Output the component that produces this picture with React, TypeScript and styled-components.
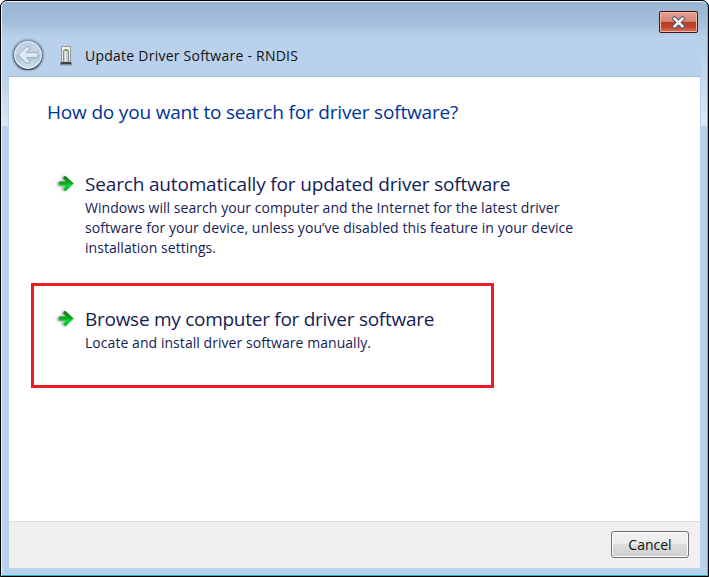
import React from "react";
import styled, { createGlobalStyle } from "styled-components";

const GlobalStyle = createGlobalStyle`
  * { box-sizing: border-box; }
  html, body { margin: 0; padding: 0; background: #fff; overflow: hidden; }
  body { font-family: "Open Sans", "Noto Sans", sans-serif; }
`;

const Frame = styled.div`
  width: 709px;
  height: 577px;
  display: flex;
  border: 1px solid #000;
  border-radius: 7px 7px 0 0;
  background: #000;
`;

const Glass = styled.div`
  flex: 1;
  display: flex;
  flex-direction: column;
  padding: 0 7px 7px 7px;
  border: solid;
  border-width: 1px;
  border-color: #f4f8fc #35cfee #22b2d0 #eef5fb;
  border-radius: 6px 6px 0 0;
  background:
    linear-gradient(180deg, #b9d1ea, #dce8f6) 0 74px / 6px 50px no-repeat,
    linear-gradient(180deg, #b9d1ea, #dce8f6) 100% 50px / 6px 74px no-repeat,
    linear-gradient(180deg, #98b4d2 0px, #a3bedb 20px, #b9d1ea 36px, #b9d1ea 100%);
`;

const TopBar = styled.header`
  height: 75px;
  display: flex;
  justify-content: space-between;
  border-bottom: 1px solid #a3bedb;
`;

const Heading = styled.div`
  display: flex;
  align-items: center;
  padding: 32px 0 0 2px;
`;

const DeviceSlot = styled.span`
  display: flex;
  margin: 1px 13px 0 15px;
`;

const WindowTitle = styled.div`
  padding-top: 2px;
`;

const TextLine = styled.span<{ $size: number; $leading: number; $tracking?: number; $color?: string }>`
  display: block;
  white-space: nowrap;
  font-size: ${(p) => p.$size}px;
  line-height: ${(p) => p.$leading}px;
  letter-spacing: ${(p) => p.$tracking ?? 0}px;
  color: ${(p) => p.$color ?? "#151c55"};
`;

const CloseButton = styled.button`
  width: 39px;
  height: 22px;
  margin: 9px 2px 0 0;
  padding: 0;
  display: flex;
  align-items: center;
  justify-content: center;
  border: 1px solid #43131c;
  border-radius: 2px;
  box-shadow: inset 0 0 0 1px #f0b8a6;
  background: linear-gradient(180deg, #e5a294 0, #d98676 47%, #b83a24 50%, #c04630 75%, #d8735a 100%);
`;

const Page = styled.main`
  flex: 1;
  display: flex;
  flex-direction: column;
  background: #fff;
`;

const Body = styled.section`
  flex: 1;
  padding: 21px 0 0 22px;
`;

const Question = styled.h1`
  margin: 0 0 0 16px;
  font-weight: 400;
`;

const Option = styled.div<{ $marked?: boolean }>`
  width: ${(p) => (p.$marked ? 463 : 600)}px;
  height: ${(p) => (p.$marked ? 105 : 100)}px;
  margin-top: ${(p) => (p.$marked ? 15 : 42)}px;
  padding: ${(p) => (p.$marked ? "20px 0 0 21px" : "3px 0 0 24px")};
  border: ${(p) => (p.$marked ? "3px solid #ed1c24" : "0")};
  display: flex;
  gap: 8px;
`;

const ArrowSlot = styled.span`
  flex: none;
  display: flex;
  padding-top: 2px;
`;

const Footer = styled.footer`
  height: 47px;
  display: flex;
  justify-content: flex-end;
  padding: 9px 11px 0 0;
  border-top: 1px solid #dfdfdf;
  background: #f0f0f0;
`;

const CancelButton = styled.button`
  width: 78px;
  height: 27px;
  padding: 0;
  display: flex;
  align-items: center;
  justify-content: center;
  font-family: inherit;
  border: 1px solid #707070;
  border-radius: 3px;
  box-shadow: inset 0 0 0 1px #fbfbfb;
  background: linear-gradient(180deg, #f2f2f2 0, #ebebeb 49%, #dddddd 50%, #cfcfcf 100%);
`;

const BackIcon = () => (
  <svg width="34" height="34" viewBox="0 0 34 34">
    <defs>
      <linearGradient id="backDisc" x1="0" y1="0" x2="0" y2="1">
        <stop offset="0" stopColor="#bfd0e2" />
        <stop offset="0.48" stopColor="#c4d5e6" />
        <stop offset="0.52" stopColor="#adc4da" />
        <stop offset="1" stopColor="#d3e3f1" />
      </linearGradient>
      <linearGradient id="backRing" x1="0" y1="0" x2="0" y2="1">
        <stop offset="0" stopColor="#7990a8" />
        <stop offset="0.6" stopColor="#60738c" />
        <stop offset="1" stopColor="#344258" />
      </linearGradient>
    </defs>
    <circle cx="17" cy="17" r="15.8" fill="none" stroke="#9bb1c9" strokeWidth="1.6" />
    <circle cx="17" cy="17" r="14.5" fill="url(#backDisc)" stroke="url(#backRing)" strokeWidth="1.2" />
    <circle cx="17" cy="17" r="13.3" fill="none" stroke="#e3edf6" strokeWidth="1" />
    <path
      d="M7.2 17 L15 9 Q17 7.6 18.4 9.3 Q19.2 10.8 18 12 L15.6 14.4 H25 Q27.2 14.8 27.2 17 Q27.2 19.2 25 19.6 H15.6 L18 22.2 Q19.2 23.4 18.4 24.6 Q17 26.4 15 25 Z"
      fill="#dfe8f1"
      stroke="#93a6ba"
      strokeWidth=".9"
      strokeLinejoin="round"
    />
  </svg>
);

const DeviceIcon = () => (
  <svg width="12" height="20" viewBox="0 0 12 20">
    <path d="M1.5 .5 H10.5 V16 H1.5 Z" fill="#e9ebea" stroke="#96999b" />
    <path d="M2.5 1.5 H9.5 V3.5 H2.5 Z" fill="#fafafa" />
    <path d="M3.5 15.5 V4.5 L5 3.5 H7 L8.5 4.5 V15.5" fill="#c8cbc9" stroke="#8b8f8f" />
    <path d="M5.5 5.5 V15" stroke="#f5f5f5" />
    <path d="M4.5 4.3 L6 3 L7.5 4.3 L7.2 5 H5 Z" fill="#43b52c" />
    <path d="M1 16 H11 L12 18.4 H0 Z" fill="#3e4243" />
    <path d="M0 19 H12" stroke="#8d969c" />
  </svg>
);

const CloseIcon = () => (
  <svg width="15" height="13" viewBox="0 0 15 13">
    <path d="M3.5 2.5 L11.5 10.5 M11.5 2.5 L3.5 10.5" stroke="#4b5266" strokeWidth="4.8" strokeLinecap="square" transform="translate(.3 .5) scale(.96 .92)" />
    <path d="M3.5 2.5 L11.5 10.5 M11.5 2.5 L3.5 10.5" stroke="#f6f6f6" strokeWidth="2.8" strokeLinecap="square" transform="translate(.3 .5) scale(.96 .92)" />
  </svg>
);

const ArrowIcon = () => (
  <svg width="22" height="22" viewBox="0 0 22 22">
    <defs>
      <linearGradient id="goFill" x1="0" y1="0" x2="0" y2="1">
        <stop offset="0" stopColor="#067d0d" />
        <stop offset="0.45" stopColor="#10a51a" />
        <stop offset="0.65" stopColor="#05d83a" />
        <stop offset="1" stopColor="#08b627" />
      </linearGradient>
      <filter id="goShadow" x="-40%" y="-40%" width="180%" height="180%">
        <feGaussianBlur stdDeviation="1.2" />
      </filter>
    </defs>
    <path d="M2 8.6 H8 L6 5 L9 2.5 L16 10 L10 19 L6 16.5 L7.5 13.4 H2 Z" fill="#7d877f" opacity=".6" filter="url(#goShadow)" />
    <path
      d="M4.2 8.4 H11 L8.3 5.5 Q8 4.7 8.8 3.7 Q9.8 2.8 10.8 3.2 L18.8 10.5 L11 18 Q10 18.4 9 17.3 Q8.3 16.2 8.6 15.4 L11 12.7 H4.2 Q3.4 10.5 4.2 8.4 Z"
      fill="url(#goFill)"
    />
  </svg>
);

type Line = { text: string; tracking: number };

const Choice = ({ title, lines, marked }: { title: Line; lines: Line[]; marked?: boolean }) => (
  <Option $marked={marked}>
    <ArrowSlot><ArrowIcon /></ArrowSlot>
    <div>
      <TextLine $size={19} $leading={27} $tracking={title.tracking}>{title.text}</TextLine>
      {lines.map((l) => (
        <TextLine key={l.text} $size={14} $leading={20} $tracking={l.tracking}>{l.text}</TextLine>
      ))}
    </div>
  </Option>
);

export default function App() {
  return (
    <>
      <GlobalStyle />
      <Frame>
        <Glass>
          <TopBar>
            <Heading>
              <BackIcon />
              <DeviceSlot><DeviceIcon /></DeviceSlot>
              <WindowTitle>
                <TextLine $size={14} $leading={20} $tracking={0.24} $color="#111">Update Driver Software - RNDIS</TextLine>
              </WindowTitle>
            </Heading>
            <CloseButton aria-label="Close"><CloseIcon /></CloseButton>
          </TopBar>
          <Page>
            <Body>
              <Question>
                <TextLine $size={19} $leading={28} $tracking={-0.18} $color="#003399">How do you want to search for driver software?</TextLine>
              </Question>
              <Choice
                title={{ text: "Search automatically for updated driver software", tracking: -0.17 }}
                lines={[
                  { text: "Windows will search your computer and the Internet for the latest driver", tracking: 0.045 },
                  { text: "software for your device, unless you’ve disabled this feature in your device", tracking: 0.06 },
                  { text: "installation settings.", tracking: 0.04 },
                ]}
              />
              <Choice
                marked
                title={{ text: "Browse my computer for driver software", tracking: -0.27 }}
                lines={[{ text: "Locate and install driver software manually.", tracking: 0.055 }]}
              />
            </Body>
            <Footer>
              <CancelButton>
                <TextLine $size={14} $leading={20} $color="#111">Cancel</TextLine>
              </CancelButton>
            </Footer>
          </Page>
        </Glass>
      </Frame>
    </>
  );
}
